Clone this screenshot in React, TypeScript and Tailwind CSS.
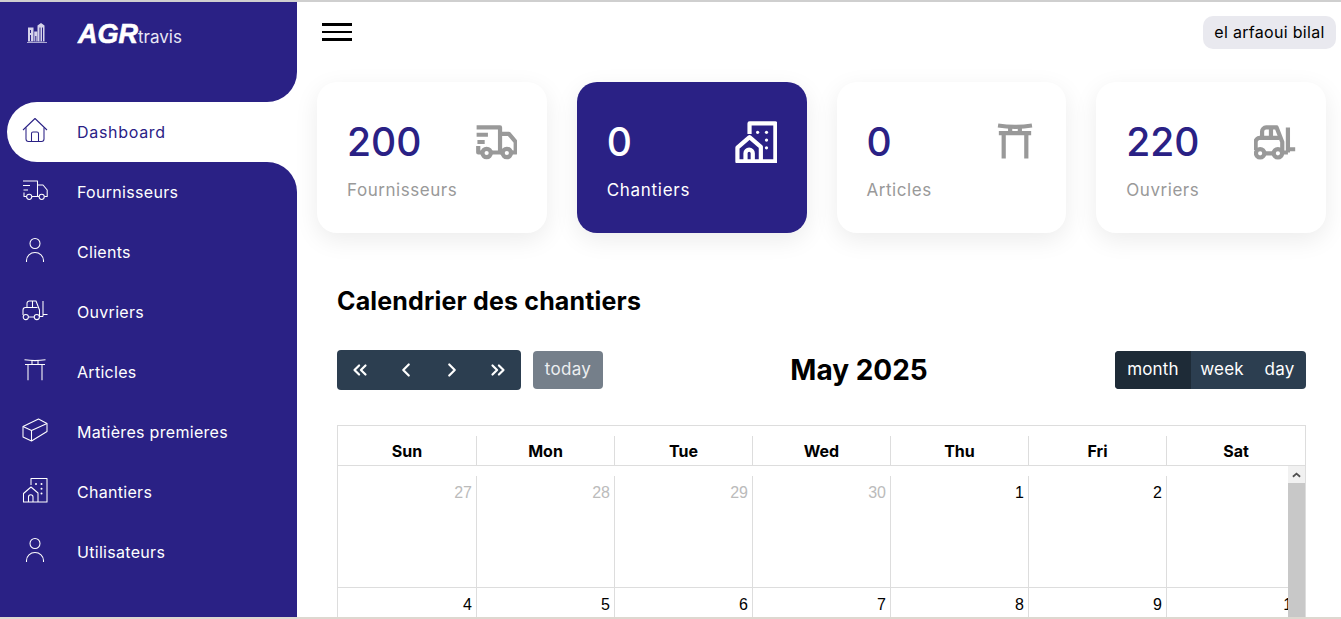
import { ChevronLeft, ChevronRight, ChevronsLeft, ChevronsRight } from "lucide-react";
import type { ReactNode } from "react";

const icons: Record<string, ReactNode> = {
  home: (
    <>
      <path d="M1 13 13 1.5 25 13" />
      <path d="M4 10.5V22a2.5 2.5 0 0 0 2.5 2.5h13A2.5 2.5 0 0 0 22 22V10.5" />
      <path d="M9.5 24.5V16.5a1.5 1.5 0 0 1 1.5-1.5h4a1.5 1.5 0 0 1 1.5 1.5v8" />
    </>
  ),
  truck: (
    <>
      <path d="M1 4H15.5V19.5H10" />
      <path d="M15.5 8H21L25.2 13V19.5H22.5M15.5 19.5H17" />
      <path d="M1 8.5H8M1.5 13H6M2 15.5V19.5H4.5" />
      <circle cx="7.2" cy="19.8" r="2.6" />
      <circle cx="19.7" cy="19.8" r="2.6" />
    </>
  ),
  person: (
    <>
      <circle cx="13" cy="6.5" r="5" />
      <path d="M4.5 25V23.5a8.5 8 0 0 1 17 0V25" />
    </>
  ),
  forklift: (
    <>
      <path d="M5 10.5V6.5a2.5 2.5 0 0 1 2.5-2.5H14L17.5 13V19.8" />
      <path d="M5 10.5H15.5M10.5 4V10.5" />
      <path d="M1 18V13a2.5 2.5 0 0 1 2.5-2.5H6M6.5 20H12M17.5 19.5H21" />
      <path d="M21 4V17.5H25.5M21 17.5V19.5" />
      <circle cx="3.8" cy="20" r="2.6" />
      <circle cx="14.8" cy="20" r="2.6" />
    </>
  ),
  torii: (
    <>
      <path d="M2.5 2.8Q13 4.4 23.5 2.8" />
      <path d="M3 7.5H23" />
      <path d="M6 7.5V23.2M20 7.5V23.2M10 3.5V7.5M16 3.5V7.5" />
    </>
  ),
  cube: (
    <>
      <path d="M1 9.5 16.5 2 25 6.5V14.5L9.5 24 1 20Z" />
      <path d="M1 9.5 9.5 13.5 25 6.5M9.5 13.5V24" />
    </>
  ),
  building: (
    <>
      <path d="M9 8V1.5H25V25H1.5V16.5L9 10 16 16V25" />
      <path d="M6.5 25V20a2.2 2.2 0 0 1 4.5 0V25" />
      <g fill="currentColor" stroke="none">
        <circle cx="14" cy="7" r="1" />
        <circle cx="19.5" cy="7" r="1" />
        <circle cx="19.5" cy="11.8" r="1" />
        <circle cx="19.5" cy="16.6" r="1" />
      </g>
    </>
  ),
};

function Icon({ name, size, stroke }: { name: string; size: number; stroke: number }) {
  return (
    <svg
      viewBox="0 0 26 26"
      width={size}
      height={size}
      fill="none"
      stroke="currentColor"
      strokeWidth={stroke}
      strokeLinejoin="round"
      className="shrink-0"
    >
      {icons[name]}
    </svg>
  );
}

function NavRow({ icon, label }: { icon: string; label: string }) {
  return (
    <div className="flex h-[60px] items-center pl-[22px] text-white">
      <div className="mb-1">
        <Icon name={icon} size={26} stroke={1.05} />
      </div>
      <span className="ml-[29px] text-[16px] tracking-[0.3px]">{label}</span>
    </div>
  );
}

function Sidebar() {
  const rows = [
    ["truck", "Fournisseurs"],
    ["person", "Clients"],
    ["forklift", "Ouvriers"],
    ["torii", "Articles"],
    ["cube", "Matières premieres"],
    ["building", "Chantiers"],
    ["person", "Utilisateurs"],
  ];
  return (
    <aside className="flex w-[297px] shrink-0 flex-col bg-white">
      <div className="flex h-[100px] items-start rounded-br-[30px] bg-[#2a2185] pl-[27px] pt-[21px] text-white">
        <svg viewBox="0 0 20 20" width="20" height="20" className="shrink-0" fill="#d5d3ea">
          <path d="M0 19.2h20V20H0zM1 4.5h5.5v14H1zM7.2 8.5h3v10h-3zM10.5 2.5 14 0l3.5 2.5v16h-7z" />
          <path d="M3 7h1v3H3zM3 12h1v6H3zM12.5 4.5h1v14h-1zM15 4.5h1v14h-1zM8.3 13h1v5.5h-1z" fill="#2a2185" />
        </svg>
        <div className="ml-[31px] -mt-[1px] flex items-baseline">
          <span className="font-['Liberation_Sans',sans-serif] text-[27px] leading-[24px] font-bold italic [-webkit-text-stroke:0.6px_white]">AGR</span>
          <span className="text-[17px] leading-[24px] font-normal text-[#e8e7f5]">travis</span>
        </div>
      </div>
      <div className="bg-[#2a2185] pl-[7px]">
        <div className="flex h-[60px] items-center rounded-l-[30px] bg-white pl-[15px] text-[#2a2185]">
          <div className="mb-1">
            <Icon name="home" size={26} stroke={1.05} />
          </div>
          <span className="ml-[29px] text-[16px] tracking-[0.7px]">Dashboard</span>
        </div>
      </div>
      <nav className="flex-1 rounded-tr-[30px] bg-[#2a2185]">
        {rows.map(([icon, label]) => (
          <NavRow key={label} icon={icon} label={label} />
        ))}
      </nav>
    </aside>
  );
}

function StatCard({ value, label, icon, active }: { value: string; label: string; icon: string; active?: boolean }) {
  return (
    <div
      className={
        active
          ? "flex h-[151px] justify-between rounded-[20px] bg-[#2a2185] pl-[30px] pr-[30px] pt-[30px] shadow-[0_7px_25px_rgba(0,0,0,0.08)]"
          : "flex h-[151px] justify-between rounded-[20px] bg-white pl-[30px] pr-[30px] pt-[30px] shadow-[0_7px_25px_rgba(0,0,0,0.08)]"
      }
    >
      <div>
        <div className={active ? "text-[39px] leading-[60px] font-medium text-white" : "text-[39px] leading-[60px] font-medium text-[#2a2185]"}>{value}</div>
        <div className={active ? "mt-[5px] text-[17px] leading-[27px] tracking-[0.7px] text-white" : "mt-[5px] text-[17px] leading-[27px] tracking-[0.55px] text-[#999999]"}>{label}</div>
      </div>
      <div className={active ? "flex h-[60px] items-center text-white" : "flex h-[60px] items-center text-[#999999]"}>
        <Icon name={icon} size={42} stroke={2.6} />
      </div>
    </div>
  );
}

const days = ["Sun", "Mon", "Tue", "Wed", "Thu", "Fri", "Sat"];
const week1 = [
  ["27", true],
  ["28", true],
  ["29", true],
  ["30", true],
  ["1", false],
  ["2", false],
  ["3", false],
] as const;
const week2 = ["4", "5", "6", "7", "8", "9", "10"];

function Calendar() {
  return (
    <section className="ml-[40px] mr-[35px]">
      <h2 className="mt-[50px] text-[25px] leading-[36px] font-bold tracking-[0.17px] text-black">Calendrier des chantiers</h2>
      <div className="mt-[31px] flex h-[40px] items-center justify-between">
        <div className="flex items-center">
          <div className="flex h-[40px] w-[184px] rounded-[4px] bg-[#2c3e50] text-white">
            {[ChevronsLeft, ChevronLeft, ChevronRight, ChevronsRight].map((C, i) => (
              <div key={i} className="flex flex-1 items-center justify-center">
                <C size={22} strokeWidth={2.4} />
              </div>
            ))}
          </div>
          <div className="ml-[12px] flex h-[38px] w-[70px] items-center justify-center rounded-[4px] bg-[#757f8a] text-[17px] tracking-[0.3px] text-[#eceef0]">today</div>
        </div>
        <div className="text-[28px] leading-[40px] font-bold text-black">May 2025</div>
        <div className="flex h-[38px] overflow-hidden rounded-[4px] bg-[#2c3e50] text-[17px] tracking-[0.2px] text-white">
          <div className="flex w-[76px] items-center justify-center bg-[#1e2b37]">month</div>
          <div className="flex w-[62px] items-center justify-center">week</div>
          <div className="flex w-[53px] items-center justify-center">day</div>
        </div>
      </div>
      <div className="relative mt-[35px] h-[194px] overflow-hidden border-x border-t border-[#dddddd]">
        <div className="grid h-[40px] grid-cols-[139px_138px_138px_138px_138px_138px_138px] border-b border-[#dddddd]">
          {days.map((d, i) => (
            <div key={d} className="flex h-[39px] flex-col justify-end">
              <div
                className={
                  i < 6
                    ? "flex h-[29px] items-center justify-center border-r border-[#dddddd] text-[16px] font-bold text-black"
                    : "flex h-[29px] items-center justify-center text-[16px] font-bold text-black"
                }
              >
                {d}
              </div>
            </div>
          ))}
        </div>
        <div className="grid h-[122px] grid-cols-[139px_138px_138px_138px_138px_138px_138px] border-b border-[#dddddd]">
          {week1.map(([n, muted], i) => (
            <div key={n} className="pt-[10px]">
              <div
                className={
                  (i < 6 ? "border-r border-[#dddddd] " : "") +
                  (muted
                    ? "h-[111px] pr-[4px] text-right font-['Liberation_Sans',sans-serif] text-[16px] leading-[34px] text-[#bbbbbb]"
                    : "h-[111px] pr-[4px] text-right font-['Liberation_Sans',sans-serif] text-[16px] leading-[34px] text-black")
                }
              >
                {i < 6 ? n : ""}
              </div>
            </div>
          ))}
        </div>
        <div className="grid grid-cols-[139px_138px_138px_138px_138px_138px_138px]">
          {week2.map((n, i) => (
            <div
              key={n}
              className={
                i < 6
                  ? "h-[32px] border-r border-[#dddddd] pr-[4px] text-right font-['Liberation_Sans',sans-serif] text-[16px] leading-[34px] text-black"
                  : "h-[32px] pr-[4px] text-right font-['Liberation_Sans',sans-serif] text-[16px] leading-[34px] text-black"
              }
            >
              {n}
            </div>
          ))}
        </div>
        <div className="absolute right-0 top-[40px] flex h-[153px] w-[17px] flex-col bg-[#c8c8c8]">
          <div className="flex h-[17px] items-center justify-center bg-[#f1f1f1]">
            <svg viewBox="0 0 10 6" width="9" height="6" fill="none" stroke="#505050" strokeWidth="2">
              <path d="M1 5 5 1.5 9 5" />
            </svg>
          </div>
        </div>
      </div>
    </section>
  );
}

export default function App() {
  return (
    <div className="flex h-[619px] w-[1341px] flex-col overflow-hidden bg-white font-['Inter',sans-serif]">
      <div className="h-[2px] shrink-0 bg-[#cfcfcf]" />
      <div className="flex min-h-0 flex-1">
        <Sidebar />
        <main className="min-w-0 flex-1 overflow-hidden">
          <header className="flex h-[60px] items-center justify-between pl-[25px] pr-[5px]">
            <div className="flex w-[30px] flex-col gap-[5px]">
              <div className="h-[2.5px] bg-black" />
              <div className="h-[2.5px] bg-black" />
              <div className="h-[2.5px] bg-black" />
            </div>
            <div className="flex h-[33px] w-[133px] items-center justify-center rounded-[10px] bg-[#e9e9ef] text-[16px] tracking-[0.3px] text-black">el arfaoui bilal</div>
          </header>
          <div className="mt-[20px] grid grid-cols-4 gap-[30px] pl-[20px] pr-[15px]">
            <StatCard value="200" label="Fournisseurs" icon="truck" />
            <StatCard value="0" label="Chantiers" icon="building" active />
            <StatCard value="0" label="Articles" icon="torii" />
            <StatCard value="220" label="Ouvriers" icon="forklift" />
          </div>
          <Calendar />
        </main>
      </div>
      <div className="h-[2px] shrink-0 bg-[#ddd8d0]" />
    </div>
  );
}
